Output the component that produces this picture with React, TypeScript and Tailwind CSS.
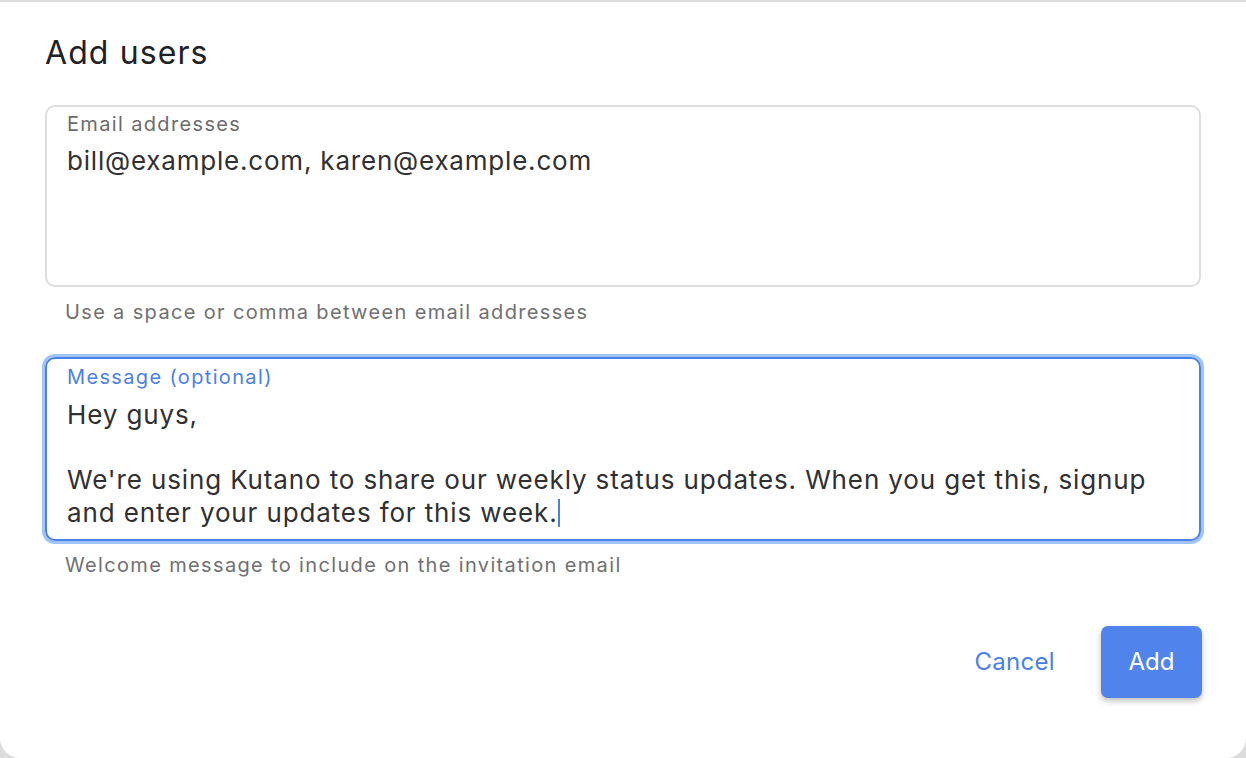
import React from "react";

export default function App() {
  return (
    <div className="w-[1246px] h-[758px] bg-[#dcdcdc] pt-[2px] font-['Inter',sans-serif] overflow-hidden">
      <div className="h-[756px] bg-white rounded-b-[20px] px-[45px] pt-[31px] flex flex-col">
        <h1 className="text-[32px] leading-[40px] tracking-[1.1px] text-[#202124] font-normal">Add users</h1>

        <div className="mt-[32px] h-[182px] border-2 border-[#dedede] rounded-[10px] px-[20px] pt-[5px]">
          <div className="text-[20px] leading-[24px] tracking-[1.35px] text-[#6b6b6b]">Email addresses</div>
          <div className="mt-[9px] text-[26px] leading-[32px] tracking-[0.8px] text-[#303030]">
            bill@example.com, karen@example.com
          </div>
        </div>
        <div className="mt-[13px] pl-[20px] text-[20px] leading-[24px] tracking-[1.35px] text-[#707070]">
          Use a space or comma between email addresses
        </div>

        <div className="mt-[33px] h-[184px] border-2 border-[#4a80e8] rounded-[10px] shadow-[0_0_0_3px_#9fc4fa] px-[20px] pt-[6px]">
          <div className="text-[20px] leading-[24px] tracking-[1.35px] text-[#4a80e8]">Message (optional)</div>
          <div className="mt-[10px] text-[26px] leading-[32.5px] tracking-[0.87px] text-[#303030]">
            <div>Hey guys,</div>
            <div>&nbsp;</div>
            <div className="whitespace-nowrap">We're using Kutano to share our weekly status updates. When you get this, signup</div>
            <div className="flex items-center">
              <span>and enter your updates for this week.</span>
              <span className="inline-block w-[2px] h-[28px] bg-[#4a80e8]" />
            </div>
          </div>
        </div>
        <div className="mt-[12px] pl-[20px] text-[20px] leading-[24px] tracking-[1.35px] text-[#707070]">
          Welcome message to include on the invitation email
        </div>

        <div className="mt-[49px] flex justify-end items-center gap-[46px] mr-[-1px]">
          <button className="text-[24px] leading-[30px] tracking-[0.3px] text-[#4a80e8]">Cancel</button>
          <button className="w-[101px] h-[72px] rounded-[7px] bg-[#5084ec] text-white text-[24px] shadow-[0_3px_6px_rgba(0,0,0,0.25)]">
            Add
          </button>
        </div>
      </div>
    </div>
  );
}
